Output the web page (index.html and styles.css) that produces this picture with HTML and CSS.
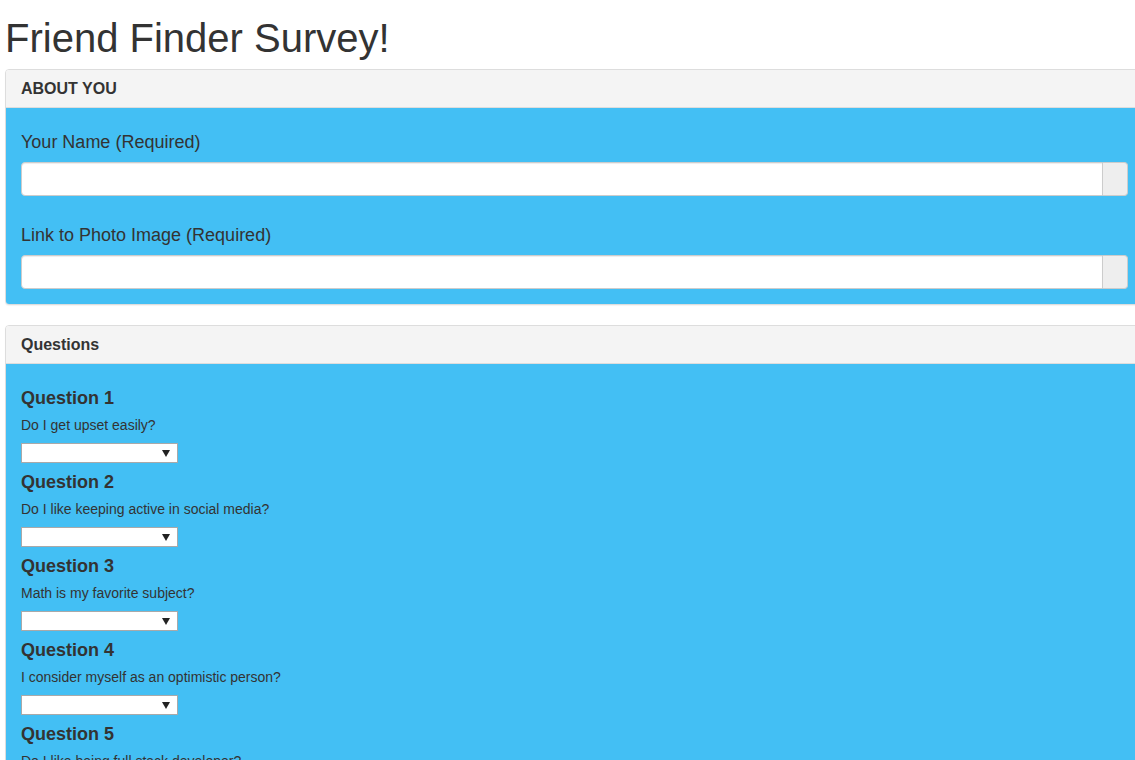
FILE: index.html
```html
<!DOCTYPE html>
<html lang="en">
<head>
<meta charset="utf-8">
<title>Friend Finder Survey</title>
<link rel="stylesheet" href="styles.css">
</head>
<body>
<div class="page">
  <h1 class="title">Friend Finder Survey!</h1>

  <div class="panel">
    <div class="panel-heading"><h3 class="panel-title upper">ABOUT YOU</h3></div>
    <div class="panel-body">
      <div class="form-group">
        <label class="field-label">Your Name (Required)</label>
        <div class="input-group">
          <input class="form-control" type="text">
          <span class="addon"></span>
        </div>
      </div>
      <div class="form-group">
        <label class="field-label">Link to Photo Image (Required)</label>
        <div class="input-group">
          <input class="form-control" type="text">
          <span class="addon"></span>
        </div>
      </div>
    </div>
  </div>

  <div class="panel">
    <div class="panel-heading"><h3 class="panel-title">Questions</h3></div>
    <div class="panel-body">
      <div class="question">
        <h4 class="q-title">Question 1</h4>
        <p class="q-text">Do I get upset easily?</p>
        <select class="q-select"><option></option><option>1 (Strongly Disagree)</option><option>2</option><option>3</option><option>4</option><option>5 (Strongly Agree)</option></select>
      </div>
      <div class="question">
        <h4 class="q-title">Question 2</h4>
        <p class="q-text">Do I like keeping active in social media?</p>
        <select class="q-select"><option></option><option>1 (Strongly Disagree)</option><option>2</option><option>3</option><option>4</option><option>5 (Strongly Agree)</option></select>
      </div>
      <div class="question">
        <h4 class="q-title">Question 3</h4>
        <p class="q-text">Math is my favorite subject?</p>
        <select class="q-select"><option></option><option>1 (Strongly Disagree)</option><option>2</option><option>3</option><option>4</option><option>5 (Strongly Agree)</option></select>
      </div>
      <div class="question">
        <h4 class="q-title">Question 4</h4>
        <p class="q-text">I consider myself as an optimistic person?</p>
        <select class="q-select"><option></option><option>1 (Strongly Disagree)</option><option>2</option><option>3</option><option>4</option><option>5 (Strongly Agree)</option></select>
      </div>
      <div class="question">
        <h4 class="q-title">Question 5</h4>
        <p class="q-text">Do I like being full stack developer?</p>
        <select class="q-select"><option></option><option>1 (Strongly Disagree)</option><option>2</option><option>3</option><option>4</option><option>5 (Strongly Agree)</option></select>
      </div>
    </div>
  </div>
</div>
</body>
</html>
```
FILE: styles.css
```css
html, body {
  margin: 0;
  padding: 0;
  overflow: hidden;
  background: #fff;
}

body {
  font-family: "Liberation Sans", Arial, Helvetica, sans-serif;
  font-size: 14px;
  line-height: 20px;
  color: #333;
}

.page {
  padding: 0 5px;
  width: 1139px;
}

.title {
  margin: 16px 0 9px;
  font-size: 40px;
  line-height: 44px;
  font-weight: normal;
  color: #333;
}

.panel {
  border: 1px solid #ddd;
  border-radius: 4px;
  margin-bottom: 20px;
  background: #fff;
  box-shadow: 0 1px 1px rgba(0, 0, 0, 0.05);
  overflow: hidden;
}

.panel-heading {
  background: #f4f4f4;
  border-bottom: 1px solid #ddd;
  padding: 10px 15px;
}

.panel-title {
  margin: 0;
  font-size: 16px;
  line-height: 17px;
  font-weight: bold;
  color: #333;
}

.panel-body {
  background: #43bff4;
  padding: 15px;
}

.form-group {
  margin-bottom: 26px;
}

.form-group:last-child {
  margin-bottom: 0;
}

.field-label {
  display: block;
  margin: 6px 0 7px;
  font-size: 18px;
  line-height: 26px;
  font-weight: normal;
  color: #333;
}

.input-group {
  display: flex;
  height: 34px;
}

.form-control {
  flex: 1;
  min-width: 0;
  box-sizing: border-box;
  height: 34px;
  margin: 0;
  padding: 6px 12px;
  border: 1px solid #ccc;
  border-radius: 4px 0 0 4px;
  background: #fff;
  font: inherit;
  box-shadow: inset 0 1px 1px rgba(0, 0, 0, 0.075);
}

.addon {
  box-sizing: border-box;
  width: 25px;
  height: 34px;
  background: #eee;
  border: 1px solid #ccc;
  border-left: 0;
  border-radius: 0 4px 4px 0;
}

.q-title {
  margin: 9px 0 7px;
  font-size: 18px;
  line-height: 20px;
  font-weight: bold;
  color: #333;
}

.q-text {
  margin: 0 0 8px;
  font-size: 14px;
  line-height: 20px;
  color: #333;
}

.q-select {
  display: block;
  box-sizing: border-box;
  width: 157px;
  height: 20px;
  margin: 0;
  padding: 0 4px;
  border: 1px solid #a9a9a9;
  border-radius: 0;
  background-color: #fff;
  background-image: url("data:image/svg+xml,%3Csvg xmlns='http://www.w3.org/2000/svg' width='8' height='7'%3E%3Cpath d='M0 0h8L4 7z' fill='%23222'/%3E%3C/svg%3E");
  background-repeat: no-repeat;
  background-position: right 7px center;
  -webkit-appearance: none;
  appearance: none;
  font: 13px "Liberation Sans", Arial, sans-serif;
  color: #000;
}
```
